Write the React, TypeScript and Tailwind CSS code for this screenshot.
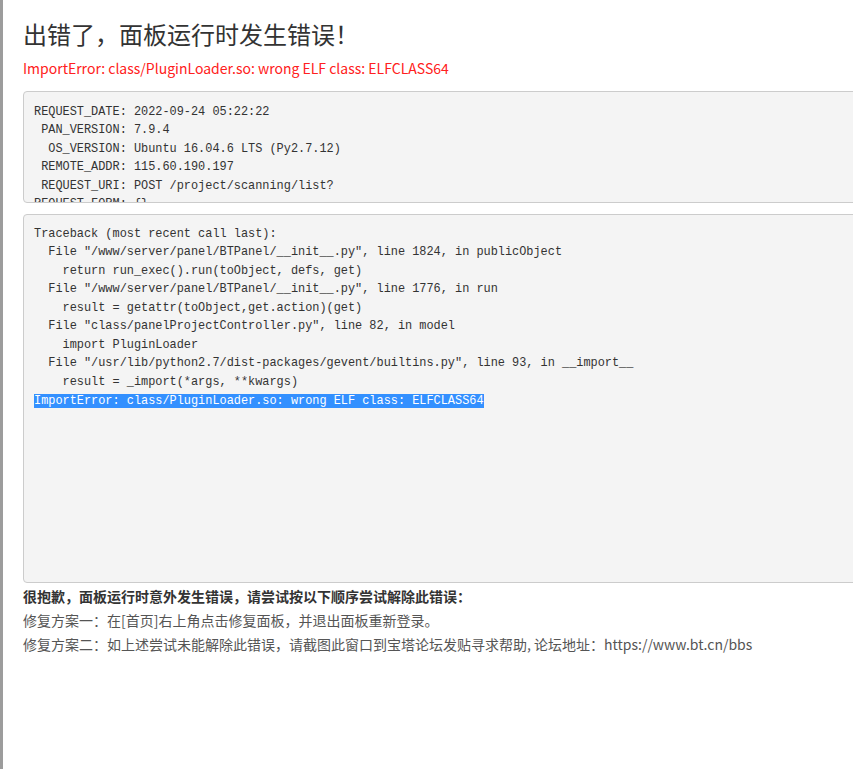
const info = [
  'REQUEST_DATE: 2022-09-24 05:22:22',
  ' PAN_VERSION: 7.9.4',
  '  OS_VERSION: Ubuntu 16.04.6 LTS (Py2.7.12)',
  ' REMOTE_ADDR: 115.60.190.197',
  ' REQUEST_URI: POST /project/scanning/list?',
  'REQUEST_FORM: {}',
  '  USER_AGENT: Mozilla/5.0',
]

const trace = [
  'Traceback (most recent call last):',
  '  File "/www/server/panel/BTPanel/__init__.py", line 1824, in publicObject',
  '    return run_exec().run(toObject, defs, get)',
  '  File "/www/server/panel/BTPanel/__init__.py", line 1776, in run',
  '    result = getattr(toObject,get.action)(get)',
  '  File "class/panelProjectController.py", line 82, in model',
  '    import PluginLoader',
  '  File "/usr/lib/python2.7/dist-packages/gevent/builtins.py", line 93, in __import__',
  '    result = _import(*args, **kwargs)',
]

const mono = "font-['Liberation_Mono',monospace] text-[11.9px] leading-[18.57px] text-[#333] whitespace-pre"
const sans = "font-['Noto_Sans_CJK_SC','Noto_Sans',sans-serif]"

export default function App() {
  return (
    <div className="flex min-h-[769px] w-[853px] overflow-hidden bg-white">
      <div className="w-[3px] shrink-0 bg-[#9c9c9c]" />
      <div className={`flex-1 pl-[20px] ${sans}`}>
        <h1 className="mt-[17px] text-[24px] leading-[34px] text-[#333]">出错了，面板运行时发生错误！</h1>
        <p className="mt-[7px] text-[14px] leading-[20px] text-[#ff2020]">
          ImportError: class/PluginLoader.so: wrong ELF class: ELFCLASS64
        </p>
        <pre className={`mt-[13px] h-[112px] w-[900px] overflow-hidden rounded-[4px] border border-[#ccc] bg-[#f4f4f4] px-[10px] pt-[10.5px] ${mono}`}>
          {info.join('\n')}
        </pre>
        <pre className={`mt-[11px] h-[369px] w-[900px] overflow-hidden rounded-[4px] border border-[#ccc] bg-[#f4f4f4] px-[10px] pt-[9.5px] ${mono}`}>
          {trace.join('\n') + '\n'}
          <span className="bg-[#3390ff] text-white">ImportError: class/PluginLoader.so: wrong ELF class: ELFCLASS64</span>
        </pre>
        <div className="mt-[1px] text-[14px] leading-[24px] text-[#333]">
          <p className="font-bold">很抱歉，面板运行时意外发生错误，请尝试按以下顺序尝试解除此错误：</p>
          <p className="text-[#555]">修复方案一：在[首页]右上角点击修复面板，并退出面板重新登录。</p>
          <p className="text-[#555]">修复方案二：如上述尝试未能解除此错误，请截图此窗口到宝塔论坛发贴寻求帮助, 论坛地址：https://www.bt.cn/bbs</p>
        </div>
      </div>
    </div>
  )
}
